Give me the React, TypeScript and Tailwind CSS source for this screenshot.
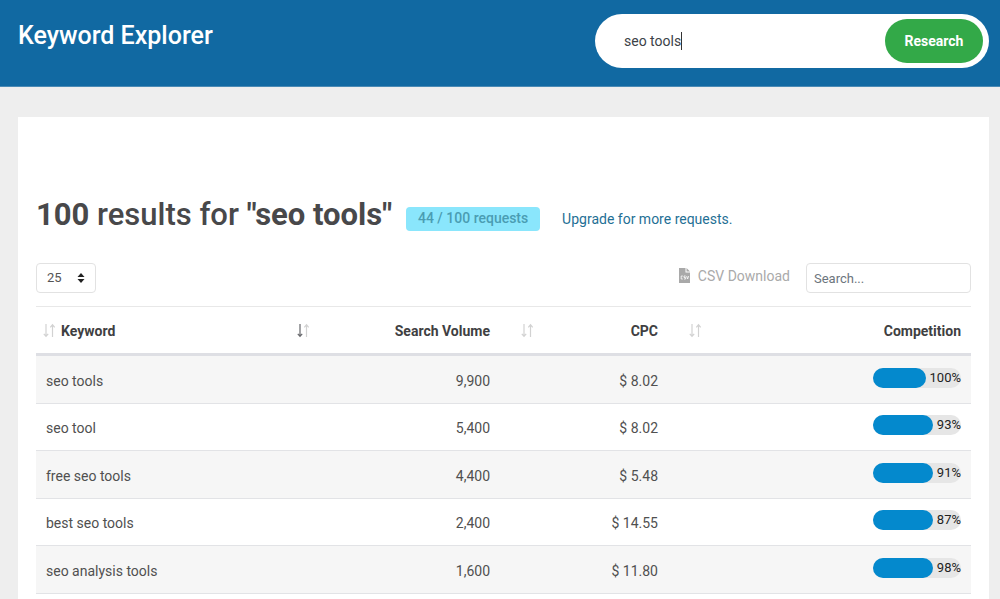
import React, { useState } from "react";

interface KeywordRow {
  keyword: string;
  volume: string;
  cpc: string;
  competition: number;
}

const ROWS: KeywordRow[] = [
  { keyword: "seo tools", volume: "9,900", cpc: "$ 8.02", competition: 100 },
  { keyword: "seo tool", volume: "5,400", cpc: "$ 8.02", competition: 93 },
  { keyword: "free seo tools", volume: "4,400", cpc: "$ 5.48", competition: 91 },
  { keyword: "best seo tools", volume: "2,400", cpc: "$ 14.55", competition: 87 },
  { keyword: "seo analysis tools", volume: "1,600", cpc: "$ 11.80", competition: 98 },
];

const SortIcon: React.FC<{ active?: boolean }> = ({ active = false }) => (
  <svg className="h-4 w-3.5 shrink-0" viewBox="0 0 14 16" fill="none" strokeWidth="1.2">
    <path d="M4 1v12M1.8 10.8 4 13.4l2.2-2.6" stroke={active ? "#66676b" : "#d2d2d2"} />
    <path d="M10.5 14V2M8.3 4.4 10.5 1.8l2.2 2.6" stroke="#d2d2d2" />
  </svg>
);

const CsvIcon = () => (
  <svg className="h-4 w-3" viewBox="0 0 12 16">
    <path d="M0 0h6.5v4.5H11V15H0z" fill="#a9a9a9" />
    <path d="M7.5 0 11 3.6H7.5z" fill="#a9a9a9" />
    <path
      d="M3.8 8H2.2v3h1.6M6.6 8H5v1.5h1.6V11H5M7.6 8l1 3 1-3"
      fill="none"
      stroke="#fff"
      strokeWidth="0.8"
    />
  </svg>
);

const CompetitionBar: React.FC<{ value: number }> = ({ value }) => (
  <div className="ml-auto flex h-5 w-22 items-center gap-1 rounded-full bg-[#e6e6e6]">
    <div className="h-5 flex-1 rounded-full bg-[#0489cd]" />
    <span className="text-[13px] leading-5 text-[#222]">{value}%</span>
  </div>
);

const Header = () => {
  const [query, setQuery] = useState("seo tools");

  return (
    <header className="flex h-[87px] items-start justify-between border-b border-[#4a8ab5] bg-[#1169a2] pt-3.5 pr-[11px] pl-[18px]">
      <h1 className="pt-1 text-[25px] leading-9 font-medium text-white">Keyword Explorer</h1>
      <form
        className="flex h-[54px] w-[394px] items-center rounded-full bg-white pr-1.5 pl-[29px]"
        onSubmit={(e) => e.preventDefault()}
      >
        <div className="flex min-w-0 flex-1 items-center">
          <input
            aria-label="Keyword"
            className="field-sizing-content text-sm text-[#3c4248] outline-none"
            value={query}
            onChange={(e) => setQuery(e.target.value)}
          />
          <span className="h-[18px] w-px bg-[#333]" />
        </div>
        <button
          type="submit"
          className="h-11 w-[98px] rounded-full bg-[#33a948] text-sm font-bold text-white"
        >
          Research
        </button>
      </form>
    </header>
  );
};

const Toolbar = () => (
  <div className="mt-7 flex items-center justify-between">
    <div className="relative">
      <select
        aria-label="Rows per page"
        defaultValue="25"
        className="h-[30px] w-[60px] appearance-none rounded-sm border border-[#e2e2e2] bg-white pl-2.5 text-[13px] text-[#555]"
      >
        <option>10</option>
        <option>25</option>
        <option>50</option>
        <option>100</option>
      </select>
      <svg
        className="pointer-events-none absolute top-2.5 right-[11px] h-2.5 w-2"
        viewBox="0 0 8 10"
        fill="#222"
      >
        <path d="M4 0 7.5 4h-7zM4 10 .5 6h7z" />
      </svg>
    </div>
    <div className="flex items-center gap-4">
      <button type="button" className="flex items-center gap-[7px] pb-1 text-sm text-[#aaa]">
        <CsvIcon />
        CSV Download
      </button>
      <input
        type="search"
        aria-label="Search results"
        placeholder="Search..."
        className="h-[30px] w-[165px] rounded-sm border border-[#e2e2e2] px-[7px] text-[13px] placeholder:text-[#6c757d]"
      />
    </div>
  </div>
);

const ResultsTable = () => (
  <table className="mt-[13px] w-full table-fixed border-separate border-spacing-0 text-sm text-[#505050]">
    <thead>
      <tr className="h-[50px] text-[#3f3f42] [&>th]:border-t [&>th]:border-b-3 [&>th]:border-[#dedfe4] [&>th]:border-t-[#e8e8e8] [&>th]:pt-0.5 [&>th]:font-bold">
        <th className="w-60 pl-1.5">
          <div className="flex items-center gap-[5px]">
            <SortIcon />
            Keyword
          </div>
        </th>
        <th className="w-56 pr-2.5 pl-5">
          <div className="flex items-center justify-between">
            <SortIcon active />
            Search Volume
          </div>
        </th>
        <th className="w-42 pr-2.5 pl-5">
          <div className="flex items-center justify-between">
            <SortIcon />
            CPC
          </div>
        </th>
        <th className="pr-2.5 pl-5">
          <div className="flex items-center justify-between">
            <SortIcon />
            Competition
          </div>
        </th>
      </tr>
    </thead>
    <tbody>
      {ROWS.map((row) => (
        <tr
          key={row.keyword}
          className="h-[47px] odd:h-12 odd:bg-[#f6f6f6] [&>td]:border-b [&>td]:border-[#e2e3e6] [&>td]:px-2.5"
        >
          <td className="pt-0.5">{row.keyword}</td>
          <td className="pt-0.5 text-right">{row.volume}</td>
          <td className="pt-0.5 text-right">{row.cpc}</td>
          <td className="pb-1">
            <CompetitionBar value={row.competition} />
          </td>
        </tr>
      ))}
    </tbody>
  </table>
);

export default function App() {
  return (
    <div className="h-screen overflow-hidden bg-[#eeeeee] font-['Roboto',sans-serif]">
      <Header />
      <main className="mt-[30px] mr-[11px] ml-[18px] min-h-screen bg-white px-[18px] pt-[78px]">
        <div className="flex items-center">
          <h2 className="text-[31px] leading-10 font-medium text-[#48484a]">
            <b>100</b> results for <b>"seo tools"</b>
          </h2>
          <span className="mt-2 ml-3.5 h-6 w-[134px] rounded-sm bg-[#8ae6fc] text-center text-sm leading-[22px] font-medium text-[#4a9db3]">
            44 / 100 requests
          </span>
          <a href="#upgrade" className="mt-2 ml-[22px] text-sm text-[#1f7095]">
            Upgrade for more requests.
          </a>
        </div>
        <Toolbar />
        <ResultsTable />
      </main>
    </div>
  );
}
